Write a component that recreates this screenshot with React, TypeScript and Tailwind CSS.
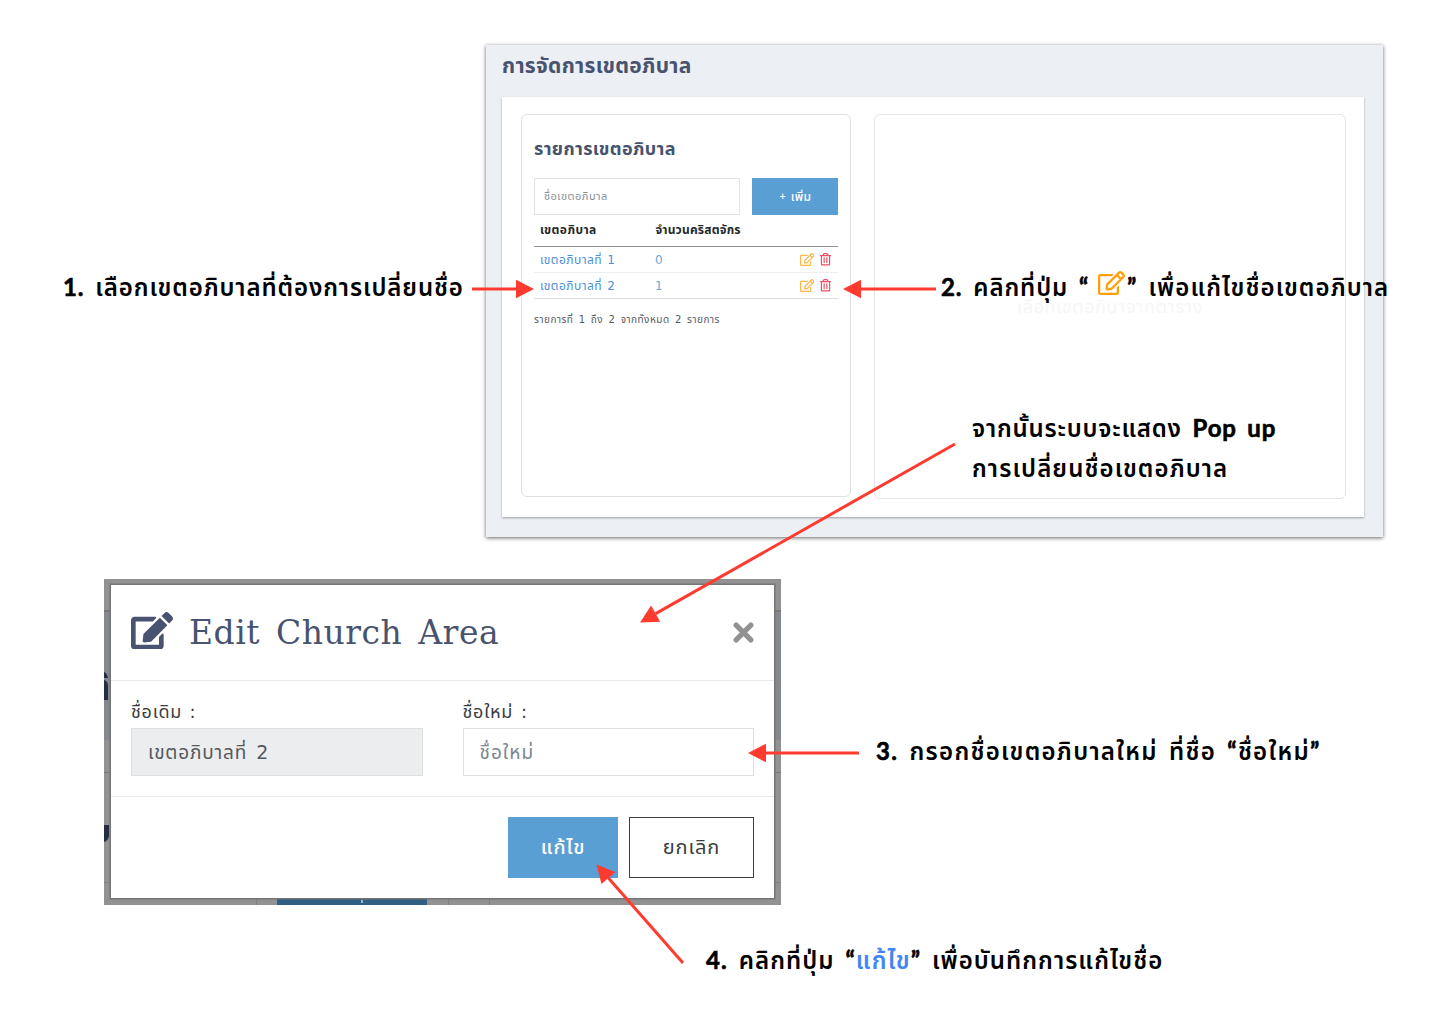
import React from "react";

const RED = "#ff3b2f";

function EditIcon({ className }: { className: string }) {
  return (
    <svg viewBox="0 0 576 512" className={className} fill="currentColor">
      <path d="M402.3 344.9l32-32c5-5 13.700-1.500 13.700 5.700V464c0 26.500-21.500 48-48 48H48c-26.500 0-48-21.500-48-48V112c0-26.500 21.500-48 48-48h273.500c7.100 0 10.700 8.600 5.700 13.700l-32 32c-1.500 1.500-3.500 2.300-5.700 2.300H48v352h352V350.500c0-2.100.8-4.100 2.300-5.600zm156.600-201.800L296.300 405.700l-90.400 10c-26.200 2.900-48.500-19.200-45.600-45.600l10-90.400L432.900 17.100c22.900-22.900 59.900-22.900 82.700 0l43.200 43.200c22.900 22.900 22.900 60 .1 82.800zM460.100 174L402 115.900 216.200 301.800l-7.300 65.300 65.300-7.300L460.100 174zm64.800-79.700l-43.200-43.200c-4.100-4.100-10.800-4.100-14.800 0L436 82l58.100 58.100 30.900-30.900c4-4.200 4-10.800-.1-14.900z" />
    </svg>
  );
}

function EditSolidIcon({ className }: { className: string }) {
  return (
    <svg viewBox="0 0 576 512" className={className} fill="currentColor">
      <path d="M402.600 83.200l90.200 90.200c3.800 3.800 3.800 10 0 13.800L274.400 405.600l-92.800 10.300c-12.400 1.400-22.900-9.100-21.500-21.500l10.300-92.800L388.800 83.200c3.800-3.800 10-3.800 13.800 0zm162-22.900l-48.800-48.800c-15.200-15.200-39.900-15.200-55.200 0l-35.400 35.400c-3.800 3.800-3.800 10 0 13.800l90.200 90.200c3.800 3.800 10 3.800 13.800 0l35.400-35.400c15.200-15.300 15.200-40 0-55.200zM384 346.200V448H64V128h229.800c3.200 0 6.200-1.300 8.500-3.500l40-40c7.600-7.600 2.200-20.500-8.500-20.500H48C21.500 64 0 85.500 0 112v352c0 26.500 21.500 48 48 48h352c26.500 0 48-21.500 48-48V306.200c0-10.700-12.900-16-20.500-8.500l-40 40c-2.200 2.300-3.500 5.300-3.500 8.500z" />
    </svg>
  );
}

function TrashIcon({ className }: { className: string }) {
  return (
    <svg viewBox="0 0 448 512" className={className} fill="currentColor">
      <path d="M268 416h24a12 12 0 0 0 12-12V188a12 12 0 0 0-12-12h-24a12 12 0 0 0-12 12v216a12 12 0 0 0 12 12zM432 80h-82.400l-34-56.700A48 48 0 0 0 274.400 0H173.600a48 48 0 0 0-41.200 23.300L98.400 80H16A16 16 0 0 0 0 96v16a16 16 0 0 0 16 16h16v336a48 48 0 0 0 48 48h288a48 48 0 0 0 48-48V128h16a16 16 0 0 0 16-16V96a16 16 0 0 0-16-16zM171.800 50.900A6 6 0 0 1 177 48h94a6 6 0 0 1 5.200 2.900L293.600 80H154.400zM368 464H80V128h288zm-212-48h24a12 12 0 0 0 12-12V188a12 12 0 0 0-12-12h-24a12 12 0 0 0-12 12v216a12 12 0 0 0 12 12z" />
    </svg>
  );
}

function AreaRow({ name, count, border }: { name: string; count: string; border: string }) {
  return (
    <div className={`flex h-[26px] items-center border-b pl-1.5 pr-[7px] text-[12px] leading-[26px] ${border}`}>
      <span className="w-[115px] whitespace-nowrap tracking-[0.45px] text-[#4a90d9] [word-spacing:1px]">{name}</span>
      <span className="flex-1 text-[#6ba7d9]">{count}</span>
      <EditIcon className="h-[13px] w-[14.500px] text-[#fdb84b]" />
      <TrashIcon className="ml-[6px] h-[12.500px] w-[11px] text-[#ef4d63]" />
    </div>
  );
}

function ManagementPanel() {
  return (
    <section className="ml-[486px] h-[492px] w-[897px] bg-[#ecf0f5] px-4 shadow-[0_1px_4px_rgba(0,0,0,0.6)]">
      <h1 className="h-[52px] whitespace-nowrap text-[21px] font-bold leading-[43px] tracking-[0.3px] text-[#48536f]">การจัดการเขตอภิบาล</h1>
      <div className="flex h-[420px] w-[862px] gap-[23px] bg-white pl-[19px] pt-[17px] shadow-[0_1px_2px_rgba(0,0,0,0.35)]">
        <div className="h-[383px] w-[330px] shrink-0 rounded-md border border-[#dfe1e3] px-3">
          <h2 className="mt-[18px] h-8 whitespace-nowrap text-[18px] font-bold leading-8 tracking-[0.35px] text-[#48536f]">รายการเขตอภิบาล</h2>
          <div className="mt-[13px] flex gap-3">
            <div className="h-[37px] w-[207px] whitespace-nowrap border border-[#e1e3e5] pl-[9px] text-[11px] leading-[36px] tracking-[0.5px] text-[#86909a]">
              ชื่อเขตอภิบาล
            </div>
            <div className="flex h-[37px] w-[86px] items-center justify-center gap-[5px] whitespace-nowrap bg-[#5a9fd4] text-[12px] font-medium leading-[36px] text-white">
              <span className="text-[8px] font-bold">+</span>
              <span className="tracking-[0.3px]">เพิ่ม</span>
            </div>
          </div>
          <div className="flex h-8 border-b border-[#8f9192] pl-1.5 text-[12px] font-bold leading-[31px] text-[#25282b]">
            <span className="w-[115.500px] whitespace-nowrap tracking-[0.4px]">เขตอภิบาล</span>
            <span className="whitespace-nowrap tracking-[0.2px]">จำนวนคริสตจักร</span>
          </div>
          <AreaRow name="เขตอภิบาลที่ 1" count="0" border="border-[#eceef0]" />
          <AreaRow name="เขตอภิบาลที่ 2" count="1" border="border-[#dcdee0]" />
          <p className="mt-[8px] whitespace-nowrap text-[10px] leading-[25px] tracking-[0.5px] text-[#555a5f] [word-spacing:1.600px]">
            รายการที่ 1 ถึง 2 จากทั้งหมด 2 รายการ
          </p>
        </div>
        <div className="h-[385px] w-[472px] shrink-0 rounded-md border border-[#e2e4e6] pt-[175px] text-center text-[18px] leading-[34px] tracking-[0.6px] text-[#f6f6f6]">
          เลือกเขตอภิบาจากตาราง
        </div>
      </div>
    </section>
  );
}

function Backdrop() {
  return (
    <div className="absolute inset-0 flex flex-col bg-[#929292]">
      <div className="h-[33px] border-b-2 border-[#777777]" />
      <div className="relative h-[128px] bg-[#86888f]">
        <svg className="absolute left-0 top-[60px] h-[28px] w-[5px]" viewBox="0 0 5 28" fill="#262c42">
          <path d="M0 0Q3 1 4 6H0ZM0 8Q4 9 4 14V28H0Z" />
        </svg>
      </div>
      <div className="h-[33px] border-b border-[#7c7c7c]" />
      <div className="relative h-[110px] border-b border-[#808080]">
        <svg className="absolute left-0 top-[52px] h-[18px] w-[6px]" viewBox="0 0 6 18" fill="#262c42">
          <path d="M0 0H5V11Q4 16 0 17Z" />
        </svg>
      </div>
      <div className="flex h-[22px] items-end">
        <div className="h-[22px] w-[153px] border-r border-[#808080]" />
        <div className="ml-5 flex h-[22px] w-[150px] items-end justify-center bg-[#2f5f84]">
          <span className="ml-5 h-[3px] w-[2px] -translate-y-[2px] bg-[#9fb3c2]" />
        </div>
        <div className="h-[22px] w-[22px] border-r border-[#808080]" />
        <div className="h-[22px] w-[41px] border-r border-[#808080]" />
      </div>
    </div>
  );
}

function EditDialog() {
  return (
    <section className="relative ml-[104px] mt-[42px] h-[326px] w-[677px] overflow-hidden pl-[7px] pt-[6px]">
      <Backdrop />
      <div className="relative h-[313px] w-[663px] bg-white text-[#3a3e42] shadow-[0_0_0_1.500px_#757575]">
        <header className="flex h-24 items-center border-b border-[#e8eaec] px-5">
          <EditSolidIcon className="mb-[4px] h-[37.500px] w-[42px] text-[#48536f]" />
          <h2 className="ml-4 whitespace-nowrap font-['DejaVu_Serif'] text-[33px] leading-10 tracking-[0.5px] text-[#48536f] [word-spacing:5px]">
            Edit Church Area
          </h2>
          <svg viewBox="0 0 20 20" className="ml-auto h-[21px] w-[21px]" stroke="#929292" strokeWidth="5" strokeLinecap="round">
            <path d="M3 3L17 17M17 3L3 17" />
          </svg>
        </header>
        <div className="flex h-[116px] gap-10 border-b border-[#e8eaec] px-5 pt-[15px]">
          <div className="w-[292px]">
            <div className="h-8 whitespace-nowrap text-[18px] leading-[31px] tracking-[0.7px] [word-spacing:1px]">ชื่อเดิม :</div>
            <div className="h-12 whitespace-nowrap border border-[#dddfe1] bg-[#ecedef] pl-4 text-[19px] leading-[47px] tracking-[0.8px] text-[#55595d] [word-spacing:2.500px]">
              เขตอภิบาลที่ 2
            </div>
          </div>
          <div className="w-[292px]">
            <div className="h-8 whitespace-nowrap text-[18px] leading-[31px] tracking-[0.7px] [word-spacing:1.500px]">ชื่อใหม่ :</div>
            <div className="h-12 whitespace-nowrap border border-[#dddfe1] pl-4 text-[19px] leading-[47px] tracking-[1px] text-[#7d8791]">ชื่อใหม่</div>
          </div>
        </div>
        <footer className="flex justify-end gap-[11px] pr-5 pt-5">
          <div className="h-[61px] w-[110px] bg-[#5a9fd4] text-center text-[20px] font-medium leading-[60px] tracking-[0.8px] text-white">แก้ไข</div>
          <div className="h-[61px] w-[125px] border border-[#3a3e42] text-center text-[20px] leading-[58px] tracking-[0.9px]">ยกเลิก</div>
        </footer>
      </div>
    </section>
  );
}

function Note({ className, children }: { className: string; children: React.ReactNode }) {
  return (
    <p
      className={`absolute whitespace-pre font-['Lato','Noto_Sans_Thai','Noto_Sans',sans-serif] text-[24px] font-semibold leading-10 text-black [word-spacing:4px] ${className}`}
    >
      {children}
    </p>
  );
}

/* Latin letters, digits and quotes inside a note, slightly heavier than the Thai text. */
function Heavy({ children }: { children: React.ReactNode }) {
  return <span className="font-bold [-webkit-text-stroke:0.600px_currentColor]">{children}</span>;
}

function Arrow({ from, to }: { from: [number, number]; to: [number, number] }) {
  const dx = to[0] - from[0];
  const dy = to[1] - from[1];
  const len = Math.hypot(dx, dy);
  const ux = dx / len;
  const uy = dy / len;
  const bx = to[0] - ux * 18;
  const by = to[1] - uy * 18;
  return (
    <g fill={RED} stroke={RED}>
      <line x1={from[0]} y1={from[1]} x2={bx} y2={by} strokeWidth={3} />
      <polygon stroke="none" points={`${to[0]},${to[1]} ${bx - uy * 9.2},${by + ux * 9.2} ${bx + uy * 9.2},${by - ux * 9.2}`} />
    </g>
  );
}

export default function App() {
  return (
    <main className="relative h-[1009px] w-[1440px] overflow-hidden bg-white pt-[45px] font-['DejaVu_Sans','Noto_Sans_Thai','Noto_Sans',sans-serif]">
      <ManagementPanel />
      <EditDialog />
      <svg className="pointer-events-none absolute inset-0" width="1440" height="1009">
        <Arrow from={[472, 289]} to={[534, 289]} />
        <Arrow from={[936, 289]} to={[843, 289]} />
        <Arrow from={[955, 444]} to={[640, 622.5]} />
        <Arrow from={[859, 753]} to={[748, 753]} />
        <Arrow from={[683, 963]} to={[596.5, 864.5]} />
      </svg>
      <Note className="left-[63px] top-[267px] tracking-[0.9px]">
        <Heavy>1.</Heavy> เลือกเขตอภิบาลที่ต้องการเปลี่ยนชื่อ
      </Note>
      <Note className="left-[941px] top-[267px] tracking-[0.9px]">
        <Heavy>2.</Heavy> คลิกที่ปุ่ม <Heavy>“</Heavy>
      </Note>
      <EditIcon className="absolute left-[1098px] top-[271px] h-[24px] w-[27px] text-[#ff9f0a]" />
      <Note className="left-[1127px] top-[267px] tracking-[1.100px]">
        <Heavy>”</Heavy> เพื่อแก้ไขชื่อเขตอภิบาล
      </Note>
      <Note className="left-[972px] top-[408px] tracking-[0.800px] [word-spacing:2px]">
        จากนั้นระบบจะแสดง <Heavy>Pop up</Heavy>
      </Note>
      <Note className="left-[972px] top-[448px] tracking-[1.100px]">การเปลี่ยนชื่อเขตอภิบาล</Note>
      <Note className="left-[876px] top-[731px] tracking-[1.300px]">
        <Heavy>3.</Heavy> กรอกชื่อเขตอภิบาลใหม่ ที่ชื่อ <Heavy>“</Heavy>ชื่อใหม่<Heavy>”</Heavy>
      </Note>
      <Note className="left-[706px] top-[940px] tracking-[1.050px]">
        <Heavy>4.</Heavy> คลิกที่ปุ่ม <Heavy>“</Heavy>
        <span className="text-[#4285f4]">แก้ไข</span>
        <Heavy>”</Heavy> เพื่อบันทึกการแก้ไขชื่อ
      </Note>
    </main>
  );
}
